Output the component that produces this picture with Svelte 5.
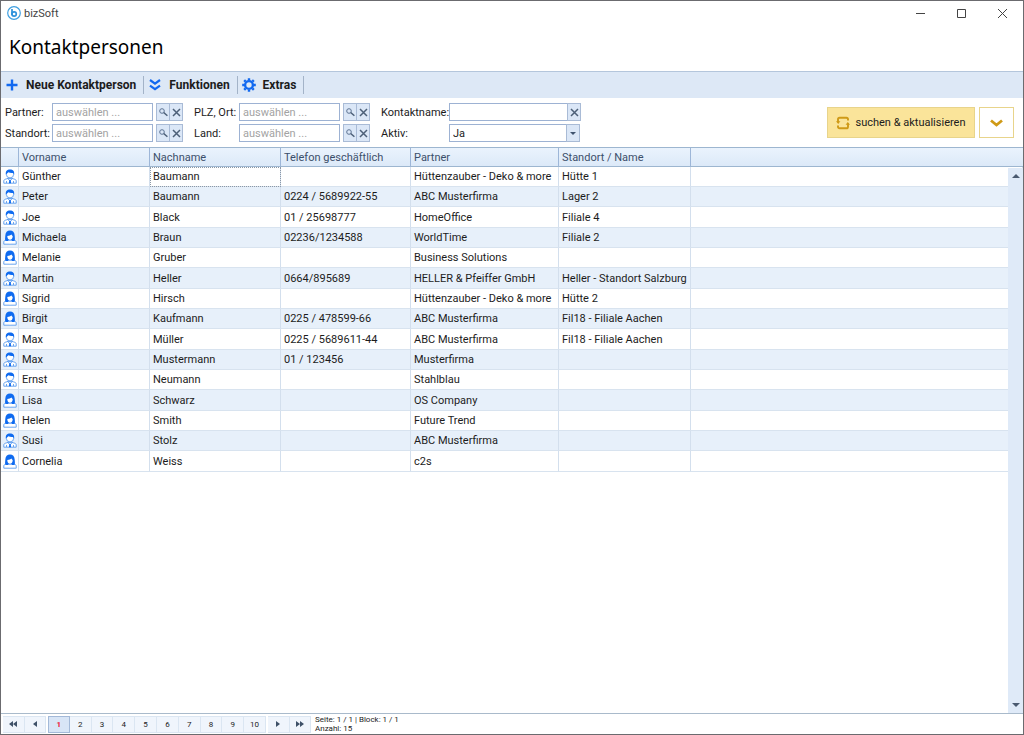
<script lang="ts">
  type Contact = {
    first: string;
    last: string;
    phone?: string;
    partner: string;
    site?: string;
    female?: boolean;
  };

  const contacts: Contact[] = [
    { first: 'Günther', last: 'Baumann', partner: 'Hüttenzauber - Deko & more', site: 'Hütte 1' },
    { first: 'Peter', last: 'Baumann', phone: '0224 / 5689922-55', partner: 'ABC Musterfirma', site: 'Lager 2' },
    { first: 'Joe', last: 'Black', phone: '01 / 25698777', partner: 'HomeOffice', site: 'Filiale 4' },
    { first: 'Michaela', last: 'Braun', phone: '02236/1234588', partner: 'WorldTime', site: 'Filiale 2', female: true },
    { first: 'Melanie', last: 'Gruber', partner: 'Business Solutions', female: true },
    { first: 'Martin', last: 'Heller', phone: '0664/895689', partner: 'HELLER & Pfeiffer GmbH', site: 'Heller - Standort Salzburg' },
    { first: 'Sigrid', last: 'Hirsch', partner: 'Hüttenzauber - Deko & more', site: 'Hütte 2', female: true },
    { first: 'Birgit', last: 'Kaufmann', phone: '0225 / 478599-66', partner: 'ABC Musterfirma', site: 'Fil18 - Filiale Aachen', female: true },
    { first: 'Max', last: 'Müller', phone: '0225 / 5689611-44', partner: 'ABC Musterfirma', site: 'Fil18 - Filiale Aachen' },
    { first: 'Max', last: 'Mustermann', phone: '01 / 123456', partner: 'Musterfirma' },
    { first: 'Ernst', last: 'Neumann', partner: 'Stahlblau' },
    { first: 'Lisa', last: 'Schwarz', partner: 'OS Company', female: true },
    { first: 'Helen', last: 'Smith', partner: 'Future Trend', female: true },
    { first: 'Susi', last: 'Stolz', partner: 'ABC Musterfirma' },
    { first: 'Cornelia', last: 'Weiss', partner: 'c2s', female: true },
  ];

  const lookups = [
    [{ id: 'partner', label: 'Partner:' }, { id: 'standort', label: 'Standort:' }],
    [{ id: 'plz', label: 'PLZ, Ort:' }, { id: 'land', label: 'Land:' }],
  ];

  const pages = [1, 2, 3, 4, 5, 6, 7, 8, 9, 10];

  let page = $state(1);
  let name = $state('');
  let active = $state('Ja');
  let filters: Record<string, string> = $state({ partner: '', standort: '', plz: '', land: '' });
</script>

{#snippet cross()}
  <svg width="9" height="9" viewBox="0 0 9 9" aria-hidden="true">
    <path d="M1 1l7 7M8 1L1 8" stroke="#4d6078" stroke-width="1.5" fill="none" />
  </svg>
{/snippet}

{#snippet person(female: boolean)}
  <svg width="14" height="15" viewBox="0 0 14 15" aria-hidden="true">
    <path d="M.8 14.2v-2.200c0-1.200 1-1.700 2.300-2l1.900-.6h4l1.900.6c1.300.3 2.300.8 2.300 2v2.200z" fill="#fff" stroke="#5a9bee" stroke-width=".9" />
    {#if female}
      <path d="M2.600 11C1.700 10 2.200 8 2.300 5.800 2.400 2.300 4.200.5 7 .5s4.600 1.800 4.700 5.300c.1 2.200.6 4.200-.3 5.200z" fill="#0f6bf0" />
      <path d="M4.300 6c1.900-.1 3.300-.6 4.200-1.500.3.800.7 1.300 1.200 1.500 0 2.400-1 3.700-2.700 3.700S4.300 8.400 4.300 6z" fill="#fff" />
      <path d="M5 10.600h4L7 13.800z" fill="#fff" />
    {:else}
      <circle cx="7" cy="5.200" r="3.700" fill="#fff" stroke="#4a92ee" stroke-width=".8" />
      <path d="M2.900 5.500C2.300 2.200 4 .4 7 .4s4.700 1.800 4.100 5.100l-.9-1.500c-1.900.3-3.600 0-4.800-.7-.6.800-1.600 1.300-2.500 2.200z" fill="#0f6bf0" />
      <path d="M4.500 9.500L7 11.600l2.500-2.100M3.500 12v2M10.500 12v2" fill="none" stroke="#4a92ee" stroke-width=".8" />
      <path d="M6.300 11h1.400l.4 3.200H5.900z" fill="#0f6bf0" />
    {/if}
  </svg>
{/snippet}

<div class="window">
  <header class="titlebar">
    <svg width="14" height="14" viewBox="0 0 14 14" aria-hidden="true">
      <circle cx="7" cy="7" r="6.300" fill="#fff" stroke="#3f9fe0" stroke-width="1.200" />
      <path d="M5 3v6" stroke="#2e92dc" stroke-width="1.700" />
      <circle cx="7.100" cy="8" r="2.200" fill="none" stroke="#2e92dc" stroke-width="1.700" />
    </svg>
    <span class="app-name">bizSoft</span>
    <div class="window-buttons">
      <button type="button" aria-label="Minimieren">
        <svg width="11" height="11" viewBox="0 0 11 11"><path d="M1 5.500h9" stroke="#444" /></svg>
      </button>
      <button type="button" aria-label="Maximieren">
        <svg width="11" height="11" viewBox="0 0 11 11"><path d="M1.500 1.500h8v8h-8z" fill="none" stroke="#444" /></svg>
      </button>
      <button type="button" aria-label="Schließen">
        <svg width="11" height="11" viewBox="0 0 11 11"><path d="M1 1l9 9M10 1l-9 9" stroke="#444" /></svg>
      </button>
    </div>
  </header>

  <h1>Kontaktpersonen</h1>

  <nav class="toolbar">
    <button type="button">
      <svg width="14" height="14" viewBox="0 0 14 14" aria-hidden="true">
        <path d="M7 1.500v11M1.500 7h11" stroke="#1269f0" stroke-width="2.400" />
      </svg>
      Neue Kontaktperson
    </button>
    <button type="button">
      <svg width="14" height="14" viewBox="0 0 14 14" aria-hidden="true">
        <path d="M2 2l5 3.600L12 2M2 7.600l5 3.600 5-3.600" fill="none" stroke="#1269f0" stroke-width="2.200" />
      </svg>
      Funktionen
    </button>
    <button type="button">
      <svg width="14" height="14" viewBox="0 0 14 14" aria-hidden="true">
        <circle cx="7" cy="7" r="3.900" fill="none" stroke="#1269f0" stroke-width="2.400" />
        {#each [0, 45, 90, 135] as angle}
          <path d="M5.800.2h2.400v2H5.800zM5.800 11.800h2.400v2H5.800z" fill="#1269f0" transform="rotate({angle} 7 7)" />
        {/each}
      </svg>
      Extras
    </button>
  </nav>

  <form class="filters" onsubmit={(e) => e.preventDefault()}>
    {#each lookups as column, i}
      <div class="lookup" class:second={i === 1}>
        {#each column as field}
          <label for={field.id}>{field.label}</label>
          <input id={field.id} type="text" placeholder="auswählen ..." bind:value={filters[field.id]} />
          <span class="pair">
            <button type="button" aria-label="{field.label} suchen">
              <svg width="9" height="9" viewBox="0 0 9 9" aria-hidden="true">
                <circle cx="3" cy="3" r="2.300" fill="none" stroke="#5d7392" />
                <path d="M4.700 4.500L8.400 7.800" stroke="#4d6078" stroke-width="1.500" />
              </svg>
            </button>
            <button type="button" aria-label="{field.label} leeren" onclick={() => (filters[field.id] = '')}>
              {@render cross()}
            </button>
          </span>
        {/each}
      </div>
    {/each}

    <div class="plain">
      <label for="kontaktname">Kontaktname:</label>
      <span class="with-clear">
        <input id="kontaktname" type="text" bind:value={name} />
        <button type="button" aria-label="Kontaktname leeren" onclick={() => (name = '')}>
          {@render cross()}
        </button>
      </span>
      <label for="aktiv">Aktiv:</label>
      <span class="drop">
        <select id="aktiv" bind:value={active}>
          <option>Ja</option>
          <option>Nein</option>
        </select>
        <span class="drop-arrow">
          <svg width="6" height="3" viewBox="0 0 6 3" aria-hidden="true"><path d="M0 0h6L3 3z" fill="#3f536e" /></svg>
        </span>
      </span>
    </div>

    <div class="actions">
      <button type="submit" class="search">
        <svg width="14" height="14" viewBox="0 0 14 14" aria-hidden="true">
          <path d="M2 6.500V3.300c0-1 .6-1.600 1.600-1.600h6.800c1 0 1.600.6 1.600 1.600v1.200" fill="none" stroke="#cf9a17" stroke-width="1.900" />
          <path d="M12 7.500v3.200c0 1-.6 1.600-1.600 1.600H3.600c-1 0-1.600-.6-1.600-1.600V9.500" fill="none" stroke="#cf9a17" stroke-width="1.900" />
          <path d="M0 5.200h4.400L2.200 8zM14 8.800H9.600L11.800 6z" fill="#cf9a17" />
        </svg>
        suchen &amp; aktualisieren
      </button>
      <button type="button" class="more" aria-label="Weitere Filter">
        <svg width="13" height="8" viewBox="0 0 13 8" aria-hidden="true">
          <path d="M1 1.500l5.500 4.500L12 1.500" fill="none" stroke="#cf9a17" stroke-width="2.800" />
        </svg>
      </button>
    </div>
  </form>

  <main class="grid">
    <table>
      <colgroup>
        <col class="c-icon" />
        <col class="c-text" />
        <col class="c-text" />
        <col class="c-phone" />
        <col class="c-partner" />
        <col class="c-site" />
        <col />
      </colgroup>
      <thead>
        <tr>
          <th></th>
          <th>Vorname</th>
          <th>Nachname</th>
          <th>Telefon geschäftlich</th>
          <th>Partner</th>
          <th>Standort / Name</th>
          <th></th>
        </tr>
      </thead>
      <tbody>
        {#each contacts as c, i}
          <tr>
            <td class="icon">{@render person(!!c.female)}</td>
            <td>{c.first}</td>
            <td class:focused={i === 0}>{c.last}</td>
            <td>{c.phone ?? ''}</td>
            <td>{c.partner}</td>
            <td>{c.site ?? ''}</td>
            <td></td>
          </tr>
        {/each}
      </tbody>
    </table>
    <div class="scrollbar">
      <svg width="8" height="4" viewBox="0 0 8 4" aria-hidden="true"><path d="M0 4h8L4 0z" fill="#4a5a70" /></svg>
      <svg width="8" height="4" viewBox="0 0 8 4" aria-hidden="true"><path d="M0 0h8L4 4z" fill="#4a5a70" /></svg>
    </div>
  </main>

  <footer class="pager">
    <div class="group">
      <button type="button" aria-label="Erste Seite">
        <svg width="8" height="6" viewBox="0 0 8 6"><path d="M4 0v6L0 3zM8 0v6L4 3z" fill="#3f5168" /></svg>
      </button>
      <button type="button" aria-label="Vorherige Seite">
        <svg width="4" height="6" viewBox="0 0 4 6"><path d="M4 0v6L0 3z" fill="#3f5168" /></svg>
      </button>
    </div>
    <div class="group numbers">
      {#each pages as p}
        <button type="button" class:current={p === page} onclick={() => (page = p)}>{p}</button>
      {/each}
    </div>
    <div class="group">
      <button type="button" aria-label="Nächste Seite">
        <svg width="4" height="6" viewBox="0 0 4 6"><path d="M0 0v6l4-3z" fill="#3f5168" /></svg>
      </button>
      <button type="button" aria-label="Letzte Seite">
        <svg width="8" height="6" viewBox="0 0 8 6"><path d="M0 0v6l4-3zM4 0v6l4-3z" fill="#3f5168" /></svg>
      </button>
    </div>
    <p>Seite: 1 / 1 | Block: 1 / 1<br />Anzahl: 15</p>
  </footer>
</div>

<style>
  :global(body) {
    margin: 0;
    background: #fff;
  }

  .window {
    box-sizing: border-box;
    min-height: 100vh;
    display: flex;
    flex-direction: column;
    border: 1px solid #6b6b6f;
    font: 11px/15px Tahoma, Roboto, sans-serif;
    color: #1c1c1c;
    background: #fff;
  }

  button, input, select {
    box-sizing: border-box;
    margin: 0;
    padding: 0;
    font: inherit;
    color: inherit;
    border-radius: 0;
  }

  button {
    display: flex;
    align-items: center;
    justify-content: center;
    border: 0;
    background: none;
  }

  svg { flex: none; display: block; }

  .titlebar {
    display: flex;
    align-items: center;
    gap: 3px;
    height: 24px;
    padding-left: 6px;
  }
  .app-name { color: #444; }

  .window-buttons { display: flex; margin-left: auto; }
  .window-buttons button { width: 41px; height: 24px; }

  h1 {
    margin: 0;
    padding: 8px 8px 9px;
    font: 400 19px/29px Tahoma, 'Noto Sans', sans-serif;
    color: #000;
  }

  .toolbar {
    display: flex;
    align-items: center;
    height: 26px;
    background: #dde8f6;
    border-top: 1px solid #b4c6dc;
  }

  .toolbar button {
    height: 18px;
    gap: 7px;
    padding: 0 7px 0 4px;
    font-size: 12px;
    font-weight: 700;
    border-right: 1px solid #a3b3c8;
  }

  .filters {
    display: flex;
    align-items: center;
    height: 49px;
    padding: 0 9px 0 4px;
  }

  .lookup, .plain {
    display: grid;
    align-items: center;
    row-gap: 3px;
  }

  .lookup {
    grid-template-columns: 47px 101px 29px;
    margin-right: 12px;
  }
  .lookup.second { grid-template-columns: 45px 101px 29px; }
  .lookup .pair { margin-left: 3px; }
  .lookup label, .plain label { white-space: nowrap; }

  .filters input, .filters select {
    width: 100%;
    height: 18px;
    padding: 0 3px;
    border: 1px solid #9db2d3;
    background: #fff;
    outline: none;
  }
  .filters input::placeholder { color: #a3a3a3; opacity: 1; }

  .pair { display: flex; }
  .pair button, .with-clear button, .drop-arrow {
    box-sizing: border-box;
    flex: none;
    width: 14px;
    height: 18px;
    background: #dbe7f7;
    border: 1px solid #a9bbd6;
  }
  .pair button + button { margin-left: -1px; }

  .plain { grid-template-columns: 68px 132px; }
  .with-clear { display: flex; }
  .with-clear button { margin-left: -1px; }

  .drop { display: grid; grid-template-columns: 1fr 14px; width: 131px; }
  .filters select {
    grid-area: 1 / 1 / 2 / 3;
    appearance: none;
  }
  .drop-arrow {
    grid-area: 1 / 2;
    display: flex;
    align-items: center;
    justify-content: center;
    pointer-events: none;
  }

  .actions { display: flex; gap: 4px; margin-left: auto; }
  .actions button { height: 31px; border: 1px solid #e8d48b; }
  .search { width: 148px; gap: 5px; background: #fae49a; white-space: nowrap; }
  .more { width: 35px; background: #fff; }

  .grid {
    flex: 1;
    display: grid;
    grid-template: 20px 1fr / 1fr 15px;
    border-top: 1px solid #9db6d0;
    border-bottom: 1px solid #a9bacb;
  }

  table {
    grid-area: 1 / 1 / 3 / 3;
    align-self: start;
    width: 100%;
    table-layout: fixed;
    border-collapse: separate;
    border-spacing: 0;
  }

  .c-icon { width: 18px; }
  .c-text { width: 131px; }
  .c-phone { width: 130px; }
  .c-partner { width: 148px; }
  .c-site { width: 132px; }

  th {
    box-sizing: border-box;
    height: 19px;
    padding: 0 3px;
    font-weight: 400;
    text-align: left;
    color: #3c4f6b;
    background: linear-gradient(#eaf3fd, #dce9f8);
    border-right: 1px solid #9db6d8;
    border-bottom: 1px solid #9db6d0;
  }
  th:last-child { border-right: 0; }

  td {
    box-sizing: border-box;
    height: 20px;
    padding: 0 0 0 3px;
    white-space: nowrap;
    overflow: hidden;
    border-right: 1px solid #d3dfed;
    border-bottom: 1px solid #d8e3ef;
  }
  /* rows average slightly over 20px */
  tr:nth-child(3n) td { height: 21px; }
  tbody tr:nth-child(even) { background: #e7f0fa; }

  td.icon { padding: 0 0 0 2px; }
  td.focused { outline: 1px dotted #8c98a6; outline-offset: -1px; }

  .scrollbar {
    grid-area: 2 / 2;
    z-index: 1;
    display: flex;
    flex-direction: column;
    align-items: center;
    justify-content: space-between;
    padding: 6px 0;
    background: #dfeaf8;
  }

  .pager {
    display: flex;
    align-items: center;
    gap: 2px;
    height: 20px;
    padding-left: 2px;
    font-size: 8px;
    line-height: 9px;
  }

  .group {
    display: grid;
    grid-auto-flow: column;
    grid-auto-columns: 1fr;
    width: 43px;
  }
  .numbers { width: 218px; }
  .pager button {
    height: 17px;
    background: #f0f5fc;
    border: 1px solid #dbe6f2;
    border-left-width: 0;
  }
  .pager .current {
    font-weight: 700;
    color: #ee1c3a;
    background: #d8e5f6;
    border: 1px solid #a3b9d8;
  }
  .pager p { margin: 0 0 0 2px; }
</style>
